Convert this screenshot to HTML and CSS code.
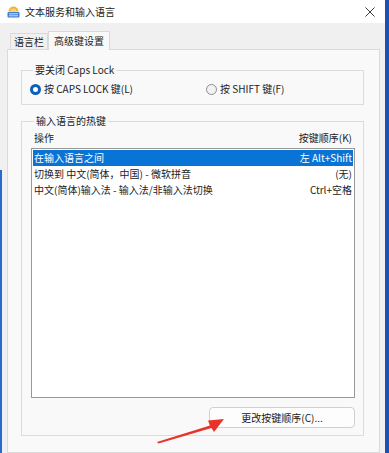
FILE: index.html
```html
<!DOCTYPE html>
<html lang="zh-CN">
<head>
<meta charset="utf-8">
<title>文本服务和输入语言</title>
<link rel="stylesheet" href="styles.css">
</head>
<body>
<div class="window">
  <div class="titlebar">
    <svg class="app-icon" width="13" height="13" viewBox="0 0 13 13">
      <path d="M1.5 6.5 A5 5 0 0 1 11.5 6.5 Z" fill="#f2b233"/>
      <path d="M3.5 6.5 A3 3 0 0 1 9.5 6.5 Z" fill="#f7d27a"/>
      <rect x="0.5" y="7" width="12" height="5.5" rx="1" fill="#3d7fd4"/>
      <rect x="2" y="8.3" width="9" height="1" fill="#cfe1f7"/>
      <rect x="2" y="10.3" width="9" height="1" fill="#cfe1f7"/>
    </svg>
    <span class="title">文本服务和输入语言</span>
    <svg class="close" width="10" height="10" viewBox="0 0 10 10">
      <path d="M0.5 0.5 L9.5 9.5 M9.5 0.5 L0.5 9.5" stroke="#3a3a3a" stroke-width="1" fill="none"/>
    </svg>
  </div>
  <div class="tabs">
    <div class="tab">语言栏</div>
    <div class="tab active">高级键设置</div>
  </div>
  <div class="panel">
    <fieldset class="group group-caps">
      <legend>要关闭 Caps Lock</legend>
      <div class="radios">
        <label class="radio"><span class="dot checked"></span>按 CAPS LOCK 键(L)</label>
        <label class="radio"><span class="dot"></span>按 SHIFT 键(F)</label>
      </div>
    </fieldset>
    <fieldset class="group group-hotkeys">
      <legend>输入语言的热键</legend>
      <div class="list-head">
        <span>操作</span>
        <span>按键顺序(K)</span>
      </div>
      <div class="list">
        <div class="row selected"><span>在输入语言之间</span><span>左 Alt+Shift</span></div>
        <div class="row"><span>切换到 中文(简体，中国) - 微软拼音</span><span>(无)</span></div>
        <div class="row"><span>中文(简体)输入法 - 输入法/非输入法切换</span><span>Ctrl+空格</span></div>
      </div>
      <div class="btn-row">
        <div class="button">更改按键顺序(C)...</div>
      </div>
    </fieldset>
  </div>
</div>
<svg class="arrow" width="389" height="453" viewBox="0 0 389 453">
  <polygon points="157,442 210,425.5 208,420.5 224,419 214,432 211.5,428 158.5,443.5" fill="#e8332b"/>
</svg>
</body>
</html>
```
FILE: styles.css
```css
html, body {
  margin: 0;
  padding: 0;
}
body {
  width: 389px;
  height: 453px;
  overflow: hidden;
  background: #1c4fb8;
  font-family: "Noto Sans CJK SC", "Noto Sans", sans-serif;
  font-size: 10px;
  color: #222222;
  position: relative;
}
.window {
  width: 385px;
  height: 453px;
  background: linear-gradient(#2a6ad0, #2a6ad0) no-repeat 0 170px / 2px 283px, #f0f0f0;
  display: flex;
  flex-direction: column;
}
.titlebar {
  height: 23px;
  background: #ffffff;
  display: flex;
  align-items: center;
  padding: 0 0 0 7px;
  box-sizing: border-box;
}
.app-icon {
  flex: none;
}
.title {
  margin-left: 5px;
  line-height: 14px;
  flex: 1;
}
.close {
  flex: none;
  margin-right: 10px;
}
.tabs {
  margin-top: 8px;
  height: 18px;
  padding-left: 10px;
  display: flex;
  align-items: flex-end;
}
.tab {
  height: 16px;
  line-height: 16px;
  padding: 0 3px;
  border: 1px solid #d9d9d9;
  border-bottom: none;
  background: #f0f0f0;
  box-sizing: border-box;
}
.tab.active {
  height: 19px;
  line-height: 18px;
  padding: 0 5px;
  margin-bottom: -1px;
  background: #f9f9f9;
  position: relative;
  z-index: 1;
}
.panel {
  margin-left: 7px;
  width: 373px;
  flex: 1;
  background: #f9f9f9;
  border: 1px solid #dadada;
  box-sizing: border-box;
  padding: 13px 15px 0 13px;
}
.group {
  margin: 0;
  padding: 0;
  border: 1px solid #dcdcdc;
  min-width: 0;
}
.group legend {
  padding: 0 2px;
  margin-left: 3px;
  line-height: 14px;
  height: 14px;
}
.group-caps {
  padding: 5px 0 8px 8px;
}
.radios {
  display: grid;
  grid-template-columns: 176px auto;
  height: 14px;
}
.radio {
  display: flex;
  align-items: center;
  line-height: 14px;
  white-space: nowrap;
}
.dot {
  width: 11px;
  height: 11px;
  border-radius: 50%;
  box-sizing: border-box;
  border: 1px solid #8e8e8e;
  background: #f2f2f2;
  margin-right: 3px;
  flex: none;
}
.dot.checked {
  border: 3px solid #0a5fbf;
  background: #ffffff;
}
.group-hotkeys {
  margin-top: 9px;
  padding: 3px 8px 7px 9px;
}
.list-head {
  display: flex;
  justify-content: space-between;
  height: 14px;
  line-height: 14px;
  padding: 0 3px;
  margin-bottom: 3px;
}
.list {
  height: 250px;
  box-sizing: border-box;
  border: 1px solid #999999;
  background: #ffffff;
  padding: 1px;
}
.row {
  display: flex;
  justify-content: space-between;
  height: 16px;
  line-height: 16px;
  padding: 0 1px;
  white-space: nowrap;
}
.row.selected {
  background: #0a74d6;
  color: #ffffff;
}
.btn-row {
  display: flex;
  justify-content: flex-end;
  margin-top: 9px;
}
.button {
  width: 146px;
  height: 21px;
  box-sizing: border-box;
  border: 1px solid #d0d0d0;
  border-radius: 4px;
  background: #fdfdfd;
  text-align: center;
  line-height: 19px;
  color: #1a1a1a;
}
.arrow {
  position: absolute;
  left: 0;
  top: 0;
  pointer-events: none;
}
```
